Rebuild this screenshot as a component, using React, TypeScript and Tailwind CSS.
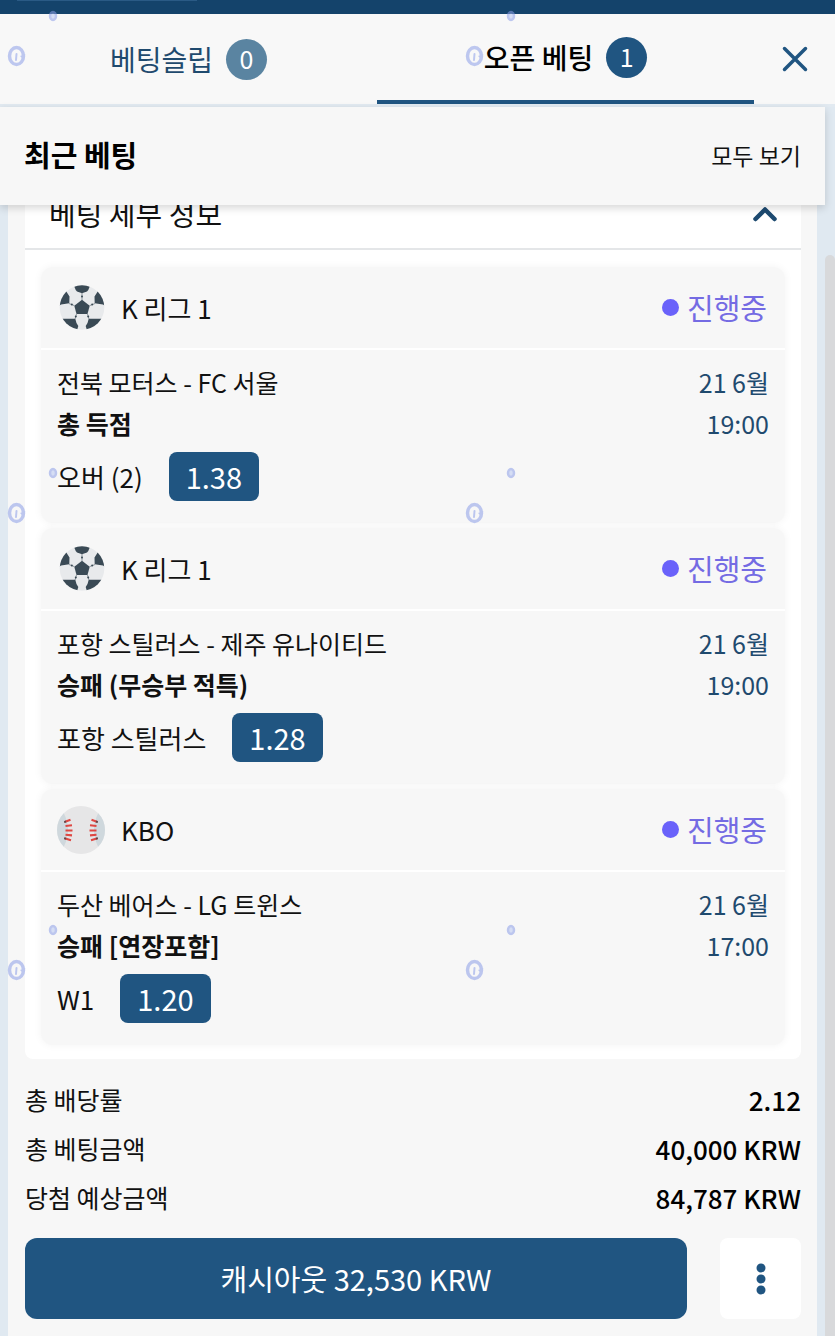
import React from "react";

type Sport = "soccer" | "baseball";

interface Bet {
  sport: Sport;
  league: string;
  match: string;
  market: string;
  pick: string;
  odds: string;
  date: string;
  time: string;
}

const bets: Bet[] = [
  { sport: "soccer", league: "K 리그 1", match: "전북 모터스 - FC 서울", market: "총 득점", pick: "오버 (2)", odds: "1.38", date: "21 6월", time: "19:00" },
  { sport: "soccer", league: "K 리그 1", match: "포항 스틸러스 - 제주 유나이티드", market: "승패 (무승부 적특)", pick: "포항 스틸러스", odds: "1.28", date: "21 6월", time: "19:00" },
  { sport: "baseball", league: "KBO", match: "두산 베어스 - LG 트윈스", market: "승패 [연장포함]", pick: "W1", odds: "1.20", date: "21 6월", time: "17:00" },
];

const totals = [
  { label: "총 배당률", value: "2.12" },
  { label: "총 베팅금액", value: "40,000 KRW" },
  { label: "당첨 예상금액", value: "84,787 KRW" },
];

function SoccerBall() {
  return (
    <svg viewBox="0 0 48 48" className="size-12 shrink-0" aria-hidden="true">
      <defs>
        <clipPath id="soccer-clip">
          <circle cx="25" cy="23.500" r="22.300" />
        </clipPath>
      </defs>
      <g clipPath="url(#soccer-clip)">
        <rect width="48" height="48" fill="#e8eaec" />
        <g fill="#3a4a55">
          <path d="M25 15.700 32.700 21.700 30.500 30H19.500L17.300 21.700Z" />
          <path d="M17.500 0h15v3Q31.500 6.500 30 7.500L25 9.200 20 7.500Q18.500 6.500 17.500 3Z" />
          <path d="M0 23.500 4 20.500 12.300 19.300 12.500 12.500 9 7 0 5Z" />
          <path d="M50 23.500 46 20.500 37.700 19.300 37.500 12.500 41 7 50 5Z" />
          <path d="M5 34.700H18.300Q19 39 21.300 42L19.500 48H5Z" />
          <path d="M45 34.700H31.700Q31 39 28.700 42L30.500 48H45Z" />
        </g>
        <path
          d="M25 9v7M17.500 21.700l-5.500-2.200M32.500 21.700l5.500-2.200M19.500 30l-1.500 5M30.500 30l1.500 5"
          stroke="#8d969d"
          strokeWidth="1"
          fill="none"
        />
        <g fill="#3a4a55">
          <circle cx="25" cy="12.500" r="1" />
          <circle cx="14.800" cy="20.500" r="1" />
          <circle cx="35.200" cy="20.500" r="1" />
          <circle cx="18.800" cy="32.500" r="1" />
          <circle cx="31.200" cy="32.500" r="1" />
        </g>
      </g>
    </svg>
  );
}

function Baseball() {
  return (
    <svg viewBox="0 0 48 48" className="size-12 shrink-0" aria-hidden="true">
      <defs>
        <clipPath id="baseball-clip">
          <circle cx="24" cy="24" r="24" />
        </clipPath>
      </defs>
      <g clipPath="url(#baseball-clip)">
        <rect width="48" height="48" fill="#e6e6e7" />
        <path d="M0 6h6C10 13 11 18 11 24S10 35 6 42H0ZM48 6h-6C38 13 37 18 37 24S38 35 42 42h6Z" fill="#cfd8dd" />
        <path
          d="M7.500 16l6-2.200M8.500 20l6.500-.8M8.500 24.500h7M8.500 28.800l6.500.6M7.500 32.300l6.500 2M40.500 16l-6-2.200M39.500 20l-6.500-.8M39.500 24.500h-7M39.500 28.800l-6.500.6M40.500 32.300l-6.500 2"
          stroke="#de4742"
          strokeWidth="2.100"
          fill="none"
        />
        <path
          d="M7.200 16.200l1.800-.8M7.200 32.200l1.800.6M40.800 16.200l-1.800-.8M40.800 32.200l-1.800.6"
          stroke="#5c4a4c"
          strokeWidth="1.800"
          fill="none"
        />
      </g>
    </svg>
  );
}

function Watermark() {
  return (
    <svg className="pointer-events-none absolute inset-0 z-20 size-full" aria-hidden="true">
      <defs>
        <pattern id="marks" width="458" height="457" patternUnits="userSpaceOnUse">
          <g fill="none" stroke="#8c9ee8" opacity=".55">
            <ellipse cx="16.500" cy="56" rx="7" ry="8.500" strokeWidth="3.500" />
            <path d="M16 60l.5-6" strokeWidth="2" strokeLinecap="round" />
            <path d="M20 56l5.500-2-2.500 5z" fill="#8c9ee8" stroke="none" />
            <ellipse cx="53" cy="16" rx="3" ry="4" fill="#b9c9f2" strokeWidth="2.500" />
          </g>
        </pattern>
      </defs>
      <rect width="100%" height="100%" fill="url(#marks)" />
    </svg>
  );
}

function BetCard({ bet }: { bet: Bet }) {
  return (
    <li className="rounded-xl bg-[#f7f7f7] shadow-[0_0_8px_#f3f3f3]">
      <div className="flex h-[83px] items-center justify-between border-b-2 border-white px-4">
        <div className="flex items-center gap-4">
          {bet.sport === "soccer" ? <SoccerBall /> : <Baseball />}
          <span className="text-[26px]">{bet.league}</span>
        </div>
        <div className="flex items-center gap-2 pr-0.5 text-[29px] text-[#746be3]">
          <span className="size-[17px] rounded-full bg-[#6a62fa]" />
          <span>진행중</span>
        </div>
      </div>
      <div className="flex justify-between px-4 pt-3 pb-[22px] leading-[41px]">
        <div>
          <p>{bet.match}</p>
          <p className="font-bold">{bet.market}</p>
          <div className="mt-2 flex items-center gap-[26px]">
            <span className="text-[26px]">{bet.pick}</span>
            <button type="button" className="h-[49px] rounded-lg bg-[#205581] px-[17px] text-[29px] text-white">
              {bet.odds}
            </button>
          </div>
        </div>
        <div className="text-right text-[#1f4a6e]">
          <p>{bet.date}</p>
          <p>{bet.time}</p>
        </div>
      </div>
    </li>
  );
}

export default function App() {
  return (
    <div className="relative flex min-h-screen flex-col overflow-hidden bg-[#e0e9f1] font-['Noto_Sans_CJK_KR',sans-serif] text-[25px] text-[#111]">
      <div className="h-3.5 bg-[#14436b] pl-[17px]">
        <div className="h-px w-[180px] bg-[#2a5a85]" />
      </div>

      <header className="flex h-[93px] items-stretch border-b-[3px] border-[#e2eaf1] bg-[#f8f8f8]">
        <nav className="flex flex-1 text-[28px]">
          <button type="button" className="flex flex-1 items-center justify-center gap-[13px] text-[#1f4a6e]">
            베팅슬립
            <span className="flex size-[41px] items-center justify-center rounded-full bg-[#5a84a1] text-[25px] text-white">0</span>
          </button>
          <button type="button" className="flex flex-1 items-center justify-center gap-[13px] border-b-4 border-[#205581] font-medium text-black">
            오픈 베팅
            <span className="flex size-[41px] items-center justify-center rounded-full bg-[#205581] text-[25px] font-normal text-white">1</span>
          </button>
        </nav>
        <button type="button" aria-label="닫기" className="flex w-[81px] items-center justify-center">
          <svg viewBox="0 0 26 26" className="size-[26px]" fill="none" stroke="#205581" strokeWidth="3.500" strokeLinecap="round">
            <path d="M2.500 2.500l21 21M23.500 2.500l-21 21" />
          </svg>
        </button>
      </header>

      <div className="relative z-10 mr-2.5 flex h-[98px] items-center justify-between bg-[#f7f7f7] px-6 pb-0.5 shadow-[0_3px_8px_rgba(0,0,0,0.16)]">
        <h1 className="text-[29px] font-bold text-black">최근 베팅</h1>
        <a href="#all" className="text-[23px]">모두 보기</a>
      </div>

      <div className="flex flex-1 items-stretch">
        <main className="mx-2 min-w-0 flex-1 bg-[#f7f7f7] pr-4 pb-[17px] pl-[17px]">
          <section className="-mt-6 rounded-lg bg-white pb-3.5">
            <button type="button" className="flex h-[69px] w-full items-center justify-between border-b-2 border-[#e4e6e8] px-6 pb-0.5 text-[29px]">
              베팅 세부 정보
              <svg viewBox="0 0 24 16" className="h-4 w-6" fill="none" stroke="#1d4a70" strokeWidth="4.500" strokeLinecap="round" strokeLinejoin="round">
                <path d="M2.500 13 12 3.500 21.500 13" />
              </svg>
            </button>
            <ul className="flex flex-col gap-[5px] px-4 pt-[17px]">
              {bets.map((bet) => (
                <BetCard key={bet.match} bet={bet} />
              ))}
            </ul>
          </section>

          <dl className="mt-4">
            {totals.map((row) => (
              <div key={row.label} className="flex h-[49px] items-center justify-between">
                <dt>{row.label}</dt>
                <dd className="text-[26px] font-medium text-black">{row.value}</dd>
              </div>
            ))}
          </dl>

          <div className="mt-4 flex h-[81px] gap-[33px]">
            <button type="button" className="flex-1 rounded-xl bg-[#205581] text-[29px] text-white">
              캐시아웃 32,530 KRW
            </button>
            <button type="button" aria-label="더 보기" className="flex w-[81px] items-center justify-center rounded-lg bg-white">
              <svg viewBox="0 0 10 32" className="h-8 w-2.5" fill="#205581">
                <circle cx="5" cy="5" r="4.500" />
                <circle cx="5" cy="16" r="4.500" />
                <circle cx="5" cy="27" r="4.500" />
              </svg>
            </button>
          </div>
        </main>
        <div className="flex w-2.5 flex-col pt-[50px]">
          <div className="flex-1 rounded-t-full bg-[#d8d9db]" />
        </div>
      </div>

      <Watermark />
    </div>
  );
}
